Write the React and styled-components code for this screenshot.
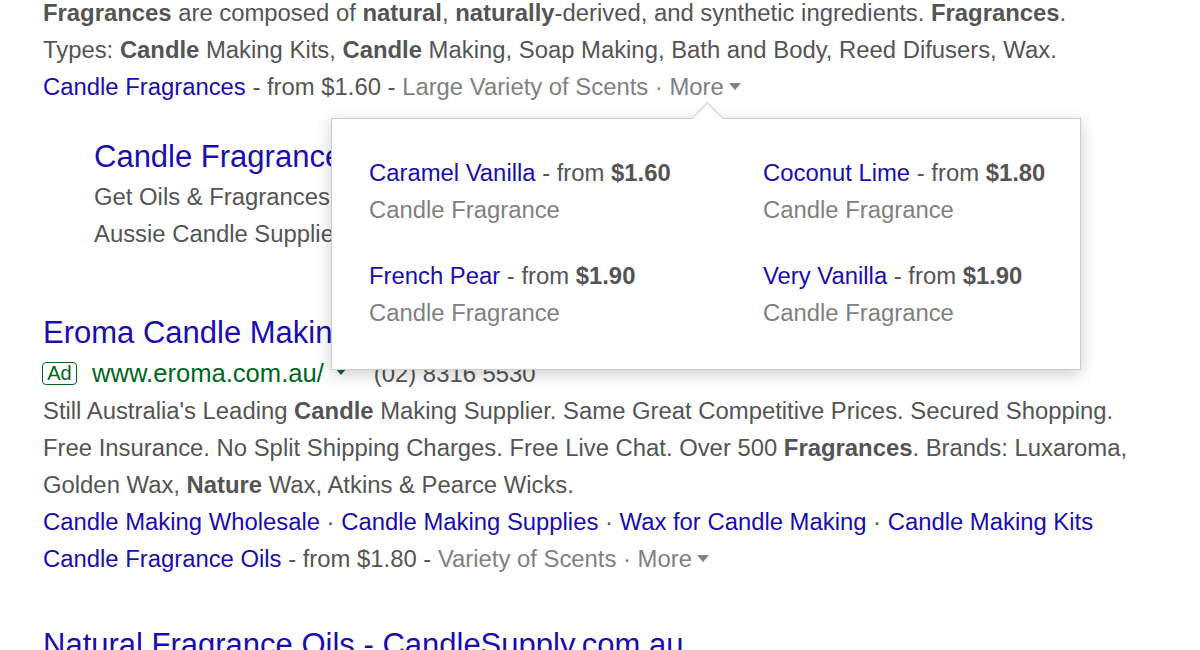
import React from 'react'
import styled, { createGlobalStyle } from 'styled-components'

const GlobalStyle = createGlobalStyle`
  html, body {
    margin: 0;
    padding: 0;
    background: #ffffff;
    overflow: hidden;
  }
  body {
    font-family: "Liberation Sans", Arial, sans-serif;
    font-size: 23.85px;
    line-height: 37px;
    color: #545454;
  }
`

const Page = styled.div`
  width: 1200px;
  height: 650px;
  overflow: hidden;
  padding-left: 43px;
  box-sizing: border-box;
`

const Content = styled.div`
  margin-top: -6px;
`

const Line = styled.div`
  white-space: nowrap;
  height: 37px;
  position: ${p => (p.$anchor ? 'relative' : 'static')};
`

const B = styled.b`
  font-weight: bold;
`

const Link = styled.a`
  color: #1a0dab;
  text-decoration: none;
  cursor: pointer;
`

const Faint = styled.span`
  color: #808080;
`

const Caret = styled.span`
  display: inline-block;
  width: 0;
  height: 0;
  margin-left: ${p => p.$gap || 5}px;
  vertical-align: middle;
  border-left: 6px solid transparent;
  border-right: 6px solid transparent;
  border-top: 7px solid ${p => p.$color || '#808080'};
  position: relative;
  top: -2px;
`

const Sitelinks = styled.div`
  padding-left: 51px;
  margin-top: 31px;
`

const Title = styled.a`
  display: block;
  color: #1a0dab;
  font-size: 31px;
  line-height: 42px;
  height: 42px;
  white-space: nowrap;
  text-decoration: none;
  margin-top: ${p => p.$gap || 0}px;
`

const AdLine = styled.div`
  display: flex;
  align-items: center;
  height: 38px;
  white-space: nowrap;
`

const AdBadge = styled.span`
  display: inline-flex;
  align-items: center;
  justify-content: center;
  box-sizing: border-box;
  width: 35px;
  height: 23px;
  border: 1.5px solid #006621;
  border-radius: 4px;
  color: #006621;
  font-size: 20px;
  line-height: 1;
  margin-left: -1px;
  margin-right: 15px;
`

const Url = styled.span`
  color: #006621;
  font-size: 25.6px;
`

const Phone = styled.span`
  margin-left: 27px;
`

const Popup = styled.div`
  position: absolute;
  left: 288px;
  top: 50px;
  width: 750px;
  box-sizing: border-box;
  background: #ffffff;
  border: 1px solid rgba(0, 0, 0, 0.2);
  box-shadow: 0 4px 16px rgba(0, 0, 0, 0.2);
  padding: 35px 0 38px 37px;
  display: grid;
  grid-template-columns: 394px 1fr;
  row-gap: 29px;
  z-index: 2;
`

const Arrow = styled.div`
  position: absolute;
  top: -12px;
  left: 364px;
  width: 22px;
  height: 22px;
  background: #ffffff;
  border-top: 1px solid rgba(0, 0, 0, 0.2);
  border-left: 1px solid rgba(0, 0, 0, 0.2);
  transform: rotate(45deg);
`

const Item = styled.div`
  white-space: nowrap;
`

const ItemSub = styled.div`
  color: #808080;
`

const items = [
  { name: 'Caramel Vanilla', price: '$1.60' },
  { name: 'Coconut Lime', price: '$1.80' },
  { name: 'French Pear', price: '$1.90' },
  { name: 'Very Vanilla', price: '$1.90' }
]

function ProductPopup() {
  return (
    <Popup>
      <Arrow />
      {items.map(item => (
        <Item key={item.name}>
          <div>
            <Link>{item.name}</Link> - from <B>{item.price}</B>
          </div>
          <ItemSub>Candle Fragrance</ItemSub>
        </Item>
      ))}
    </Popup>
  )
}

export default function App() {
  return (
    <>
      <GlobalStyle />
      <Page>
        <Content>
          <Line>
            <B>Fragrances</B> are composed of <B>natural</B>, <B>naturally</B>-derived, and
            synthetic ingredients. <B>Fragrances</B>.
          </Line>
          <Line>
            Types: <B>Candle</B> Making Kits, <B>Candle</B> Making, Soap Making, Bath and Body,
            Reed Difusers, Wax.
          </Line>
          <Line $anchor>
            <Link>Candle Fragrances</Link> - from $1.60 -{' '}
            <Faint>
              Large Variety of Scents · More
              <Caret />
            </Faint>
            <ProductPopup />
          </Line>

          <Sitelinks>
            <Title>Candle Fragrances</Title>
            <Line>Get Oils &amp; Fragrances for Candles &amp; Soaps</Line>
            <Line>Aussie Candle Supplies</Line>
          </Sitelinks>

          <Title $gap={60}>Eroma Candle Making Supplies - Candle Making Supplier</Title>
          <AdLine>
            <AdBadge>Ad</AdBadge>
            <Url>www.eroma.com.au/</Url>
            <Caret $color="#006621" $gap={11} />
            <Phone>(02) 8316 5530</Phone>
          </AdLine>
          <Line>
            Still Australia's Leading <B>Candle</B> Making Supplier. Same Great Competitive
            Prices. Secured Shopping.
          </Line>
          <Line>
            Free Insurance. No Split Shipping Charges. Free Live Chat. Over 500{' '}
            <B>Fragrances</B>. Brands: Luxaroma,
          </Line>
          <Line>
            Golden Wax, <B>Nature</B> Wax, Atkins &amp; Pearce Wicks.
          </Line>
          <Line>
            <Link>Candle Making Wholesale</Link> · <Link>Candle Making Supplies</Link> ·{' '}
            <Link>Wax for Candle Making</Link> · <Link>Candle Making Kits</Link>
          </Line>
          <Line>
            <Link>Candle Fragrance Oils</Link> - from $1.80 -{' '}
            <Faint>
              Variety of Scents · More
              <Caret />
            </Faint>
          </Line>

          <Title $gap={47}>Natural Fragrance Oils - CandleSupply.com.au</Title>
        </Content>
      </Page>
    </>
  )
}
